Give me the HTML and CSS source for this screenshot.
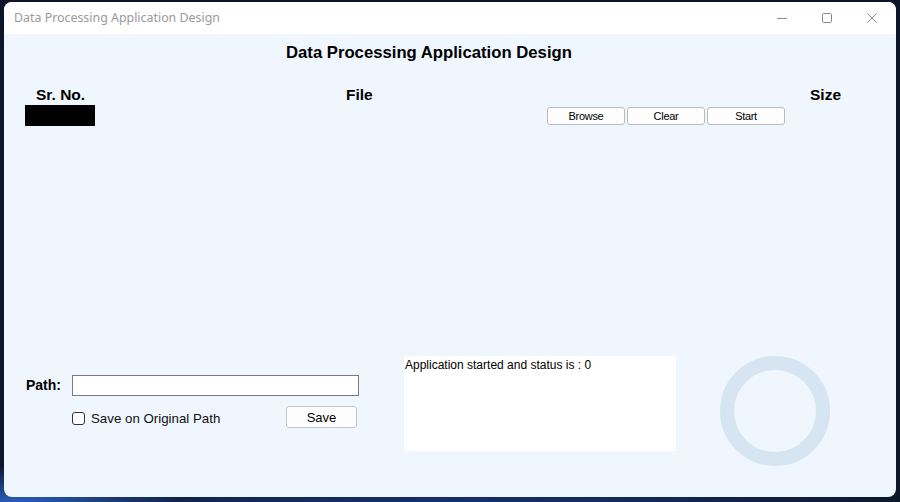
FILE: index.html
```html
<!DOCTYPE html>
<html lang="en">
<head>
<meta charset="utf-8">
<title>Data Processing Application Design</title>
<link rel="stylesheet" href="styles.css">
</head>
<body>
<div class="desktop">
  <div class="window">
    <div class="titlebar">
      <span class="title">Data Processing Application Design</span>
      <div class="controls">
        <span class="ctl"><svg width="12" height="12" viewBox="0 0 12 12"><path d="M1 6.5h10" stroke="#8a8a8a" stroke-width="1"/></svg></span>
        <span class="ctl"><svg width="12" height="12" viewBox="0 0 12 12"><rect x="1.5" y="1.5" width="9" height="9" rx="1.2" fill="none" stroke="#8a8a8a" stroke-width="1"/></svg></span>
        <span class="ctl"><svg width="12" height="12" viewBox="0 0 12 12"><path d="M1.5 1.5l9 9M10.5 1.5l-9 9" stroke="#8a8a8a" stroke-width="1"/></svg></span>
      </div>
    </div>
    <div class="content">
      <h1 class="heading">Data Processing Application Design</h1>
      <div class="header-row">
        <span>Sr. No.</span>
        <span>File</span>
        <span>Size</span>
      </div>
      <div class="file-row">
        <div class="black-box"></div>
        <div class="buttons">
          <button class="btn">Browse</button>
          <button class="btn">Clear</button>
          <button class="btn">Start</button>
        </div>
      </div>
      <div class="bottom">
        <div class="pathform">
          <div class="path-row">
            <label class="path-label">Path:</label>
            <input class="path-input" type="text">
          </div>
          <div class="save-row">
            <label class="check"><span class="box"></span>Save on Original Path</label>
            <button class="save-btn">Save</button>
          </div>
        </div>
        <div class="status">Application started and status is : 0</div>
        <div class="ring"></div>
      </div>
    </div>
  </div>
</div>
</body>
</html>
```
FILE: styles.css
```css
html, body {
  margin: 0;
  padding: 0;
}
body {
  width: 900px;
  height: 502px;
  overflow: hidden;
  background: #0c1628;
}
.desktop {
  width: 900px;
  height: 502px;
  padding: 2px 0 0 4px;
  box-sizing: border-box;
  background:
    radial-gradient(ellipse 160px 40px at 20px 505px, #2a62c9 0%, rgba(42,98,201,0) 100%),
    radial-gradient(ellipse 500px 30px at 450px 510px, #163e8a 0%, rgba(22,62,138,0) 100%),
    #0c1628;
}
.window {
  width: 892px;
  height: 495px;
  border-radius: 8px;
  overflow: hidden;
  background: #eff6fd;
  display: flex;
  flex-direction: column;
}
.titlebar {
  height: 32px;
  flex: none;
  background: #ffffff;
  display: flex;
  align-items: center;
  justify-content: space-between;
}
.title {
  margin-left: 10px;
  font-family: "Noto Sans", "Open Sans", sans-serif;
  font-size: 12.4px;
  color: #9a9a9a;
  padding-bottom: 1px;
}
.controls {
  display: flex;
  align-items: center;
  margin-right: 18px;
  gap: 33px;
  padding-bottom: 1px;
}
.ctl {
  display: flex;
  width: 12px;
  height: 12px;
}
.content {
  flex: 1;
  font-family: "Liberation Sans", Arial, sans-serif;
  color: #000;
}
.heading {
  margin: 0;
  padding: 9px 0 0 282px;
  font-size: 16.7px;
  line-height: 20px;
  font-weight: bold;
}
.header-row {
  margin-top: 23px;
  padding-left: 32px;
  display: grid;
  grid-template-columns: 310px 464px auto;
  font-size: 15.5px;
  font-weight: bold;
  line-height: 18px;
}
.file-row {
  margin-top: 1px;
  display: flex;
  align-items: flex-start;
  height: 21px;
}
.black-box {
  margin-left: 21px;
  width: 70px;
  height: 21px;
  background: #000;
}
.buttons {
  margin-left: 452px;
  margin-top: 2px;
  display: flex;
  gap: 2px;
}
.btn {
  width: 78px;
  height: 18px;
  padding: 0;
  background: #fdfdfd;
  border: 1px solid #bcbcbc;
  border-radius: 3px;
  font-family: "Liberation Sans", Arial, sans-serif;
  font-size: 11px;
  color: #000;
  letter-spacing: -0.3px;
}
.bottom {
  margin-top: 230px;
  display: flex;
  align-items: flex-start;
}
.pathform {
  width: 378px;
  padding: 19px 0 0 22px;
}
.path-row {
  display: flex;
  align-items: center;
}
.path-label {
  width: 46px;
  font-size: 14px;
  font-weight: bold;
  padding-bottom: 2px;
}
.path-input {
  width: 287px;
  height: 21px;
  box-sizing: border-box;
  margin: 0;
  border: 1px solid #7a7a7a;
  background: #fff;
  padding: 0 3px;
}
.save-row {
  margin: 10px 0 0 46px;
  width: 285px;
  display: flex;
  justify-content: space-between;
  align-items: flex-start;
}
.check {
  display: flex;
  align-items: center;
  font-size: 13.3px;
  line-height: 15px;
  gap: 6px;
  color: #111;
  margin-top: 5px;
}
.box {
  width: 13px;
  height: 13px;
  box-sizing: border-box;
  border: 1px solid #333;
  border-radius: 3px;
  background: #fff;
}
.save-btn {
  width: 71px;
  height: 22px;
  padding: 0;
  background: #fdfdfd;
  border: 1px solid #c4c4c4;
  border-radius: 3px;
  font-family: "Liberation Sans", Arial, sans-serif;
  font-size: 13px;
  color: #000;
}
.status {
  width: 272px;
  height: 95px;
  box-sizing: border-box;
  background: #fff;
  padding: 2px 1px;
  font-size: 12px;
  line-height: 14px;
}
.ring {
  margin-left: 44px;
  width: 110px;
  height: 110px;
  box-sizing: border-box;
  border: 14.5px solid #d7e5f2;
  border-radius: 50%;
}
```
